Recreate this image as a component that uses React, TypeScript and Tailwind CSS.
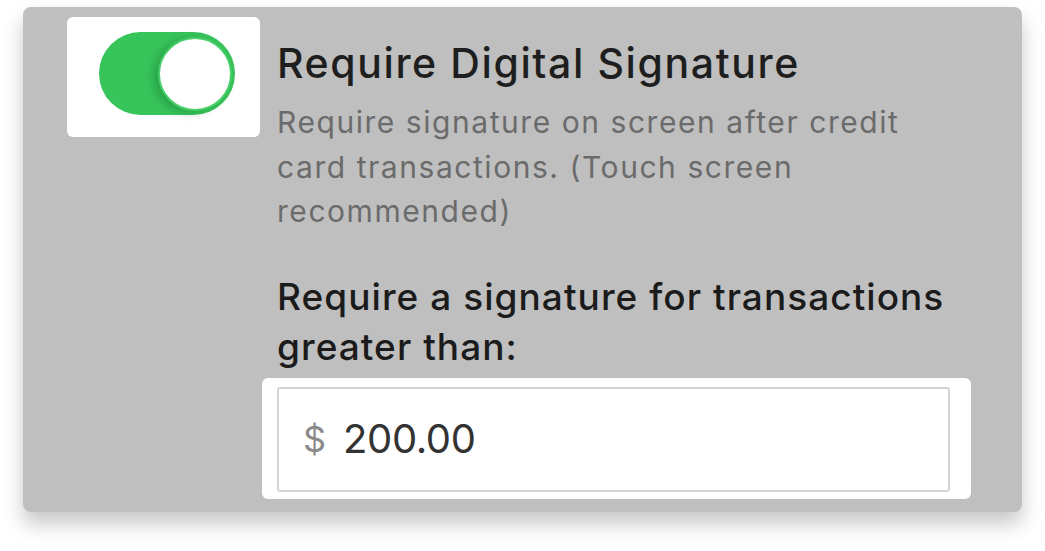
export default function App() {
  return (
    <div className="w-[1045px] h-[551px] bg-white pt-[7px] pl-[23px] font-['Inter',sans-serif]">
      {/* Card */}
      <div className="w-[999px] h-[505px] rounded-lg bg-[#bfbfbf] shadow-[0_12px_20px_rgba(0,0,0,0.22)] flex pl-[44px] pt-[10px]">
        {/* Toggle spotlight */}
        <div className="w-[193px] h-[120px] shrink-0 bg-white rounded-[6px] pl-[32px] pt-[15px]">
          <div className="relative w-[136px] h-[83px] rounded-full bg-[#37c55b]">
            <div className="absolute right-[3px] top-[4.5px] w-[74px] h-[74px] rounded-full bg-white border-[2px] border-[#49cf69] shadow-[-5px_2px_10px_rgba(0,60,20,0.25)]" />
          </div>
        </div>

        {/* Text column */}
        <div className="ml-[17px] pt-[24px] flex flex-col">
          <h2 className="text-[41px] leading-[44px] font-medium text-[#1e1e1e] tracking-[1.6px]">
            Require Digital Signature
          </h2>
          <p className="mt-[15px] w-[680px] text-[30px] leading-[44.5px] text-[#6b6b6b] tracking-[1.55px]">
            Require signature on screen after credit card transactions. (Touch screen recommended)
          </p>
          <p className="mt-[38px] w-[710px] text-[37px] leading-[50px] font-medium text-[#1b1b1b] tracking-[1.05px]">
            Require a signature for transactions greater than:
          </p>

          {/* Input spotlight */}
          <div className="mt-[6px] -ml-[15px] w-[709px] h-[121px] bg-white rounded-[6px] pl-[15px] pr-[21px] pt-[9px]">
            <div className="h-[105px] border-[2px] border-[#d4d4d4] rounded-[3px] flex items-center pl-[24px]">
              <span className="text-[36px] text-[#8a8a8a]">$</span>
              <span className="ml-[17px] text-[40px] text-[#333333] tracking-[-0.4px]">200.00</span>
            </div>
          </div>
        </div>
      </div>
    </div>
  );
}
